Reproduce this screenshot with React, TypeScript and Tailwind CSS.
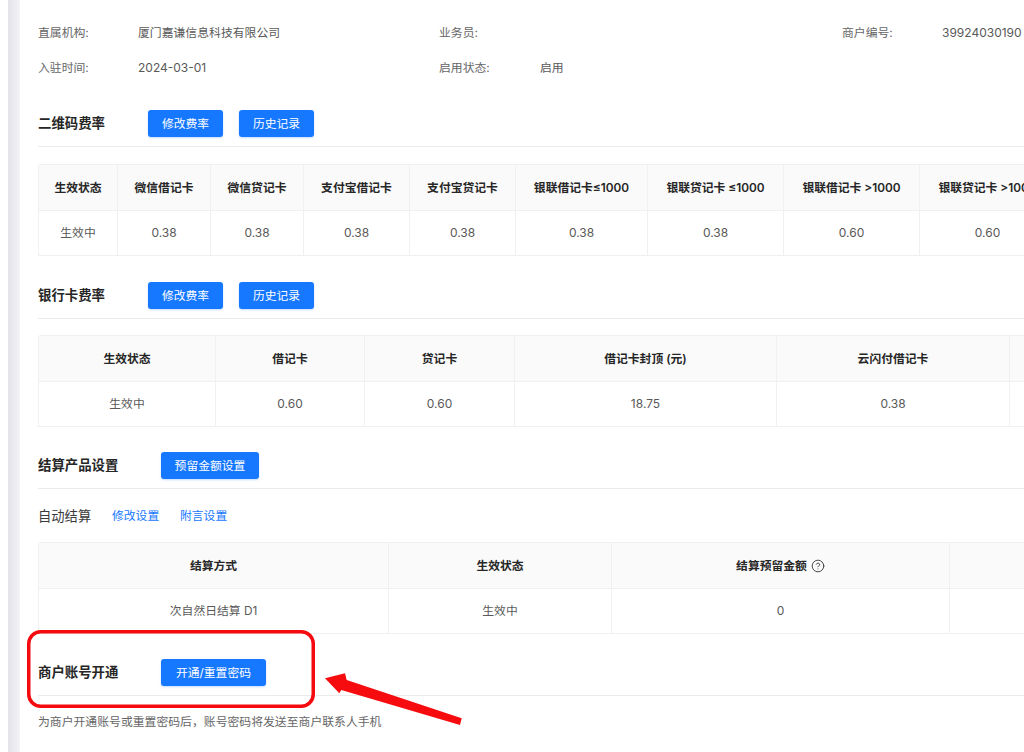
import React from "react";
import { CircleHelp } from "lucide-react";

type Col = { w: number; head: React.ReactNode; cell?: string };

function DataTable({ cols, className }: { cols: Col[]; className: string }) {
  return (
    <div className={`ml-[38px] flex w-max rounded-tl-[3px] border-t border-l border-[#f0f0f0] ${className}`}>
      {cols.map((c, i) => (
        <div key={i} className="flex shrink-0 flex-col border-r border-[#f0f0f0]" style={{ width: c.w }}>
          <div className="flex h-[46px] items-center justify-center whitespace-nowrap border-b border-[#f0f0f0] bg-[#fafafa] pt-[2px] text-[11.8px] font-semibold text-[#262626]">
            {c.head}
          </div>
          <div
            className={`flex h-[45px] items-center justify-center whitespace-nowrap border-b border-[#f0f0f0] text-[#595959] ${
              c.cell && /[\u4e00-\u9fff]/.test(c.cell) ? "pt-[2px] text-[11.8px]" : "text-xs"
            }`}
          >
            {c.cell}
          </div>
        </div>
      ))}
    </div>
  );
}

function Btn({ children, w, className = "" }: { children: React.ReactNode; w: string; className?: string }) {
  return (
    <button className={`flex h-[27px] items-center justify-center rounded-[3px] bg-[#1677ff] pt-[2px] text-[11.8px] text-white shadow-[0_1px_2px_rgba(22,119,255,0.25)] ${w} ${className}`}>
      {children}
    </button>
  );
}

function Section({ title, titleW, children, className }: { title: string; titleW: string; children: React.ReactNode; className: string }) {
  return (
    <div className={`ml-[38px] flex h-[37px] items-start border-b-[1.5px] border-[#ebebeb] ${className}`}>
      <div className={`flex h-[27px] shrink-0 items-center whitespace-nowrap text-[13.4px] font-semibold text-[#262626] ${titleW}`}>{title}</div>
      {children}
    </div>
  );
}

function Info({ label, value, w, labelW = "w-[100px]", valueCls = "pt-[2px] text-[11.85px]" }: { label: string; value?: string; w: string; labelW?: string; valueCls?: string }) {
  return (
    <div className={`flex shrink-0 items-center whitespace-nowrap ${w}`}>
      <span className={`shrink-0 pt-[2px] text-[11.85px] text-[#666666] ${labelW}`}>{label}</span>
      <span className={`text-[#595959] ${valueCls}`}>{value}</span>
    </div>
  );
}

export default function App() {
  return (
    <div className="relative flex h-[752px] w-[1024px] overflow-hidden bg-white font-['Inter','Noto_Sans_CJK_SC',sans-serif]">
      <div className="ml-[8px] h-full w-[12px] shrink-0 bg-gradient-to-r from-[#e3e3e9] to-[#f3f3f6]" />
      <main className="-ml-[20px] min-w-0 flex-1">
        <div className="mt-[15px] flex h-[35px] pl-[38px]">
          <Info label="直属机构:" value="厦门嘉谦信息科技有限公司" w="w-[401px]" />
          <Info label="业务员:" w="w-[403px]" />
          <Info label="商户编号:" value="39924030190" w="w-[200px]" valueCls="text-xs" />
        </div>
        <div className="flex h-[35px] pl-[38px]">
          <Info label="入驻时间:" value="2024-03-01" w="w-[401px]" valueCls="text-xs" />
          <Info label="启用状态:" value="启用" w="w-[403px]" labelW="w-[101px]" />
        </div>

        <Section title="二维码费率" titleW="w-[110px]" className="mt-[25px]">
          <Btn w="w-[75px]">修改费率</Btn>
          <Btn w="w-[75px]" className="ml-4">历史记录</Btn>
        </Section>
        <DataTable
          className="mt-[17px]"
          cols={[
            { w: 79, head: "生效状态", cell: "生效中" },
            { w: 93, head: "微信借记卡", cell: "0.38" },
            { w: 93, head: "微信贷记卡", cell: "0.38" },
            { w: 106, head: "支付宝借记卡", cell: "0.38" },
            { w: 106, head: "支付宝贷记卡", cell: "0.38" },
            { w: 132, head: "银联借记卡≤1000", cell: "0.38" },
            { w: 136, head: "银联贷记卡 ≤1000", cell: "0.38" },
            { w: 136, head: "银联借记卡 >1000", cell: "0.60" },
            { w: 136, head: "银联贷记卡 >1000", cell: "0.60" },
          ]}
        />

        <Section title="银行卡费率" titleW="w-[110px]" className="mt-[26px]">
          <Btn w="w-[75px]">修改费率</Btn>
          <Btn w="w-[75px]" className="ml-4">历史记录</Btn>
        </Section>
        <DataTable
          className="mt-[16px]"
          cols={[
            { w: 177, head: "生效状态", cell: "生效中" },
            { w: 149, head: "借记卡", cell: "0.60" },
            { w: 150, head: "贷记卡", cell: "0.60" },
            { w: 262, head: "借记卡封顶 (元)", cell: "18.75" },
            { w: 233, head: "云闪付借记卡", cell: "0.38" },
            { w: 100, head: "", cell: "" },
          ]}
        />

        <Section title="结算产品设置" titleW="w-[123px]" className="mt-[25px]">
          <Btn w="w-[98px]">预留金额设置</Btn>
        </Section>
        <div className="ml-[38px] mt-[17px] flex h-[20px] items-center whitespace-nowrap pt-[2px] text-[11.8px]">
          <span className="w-[74px] text-[13.3px] text-[#3a3a3a]">自动结算</span>
          <a className="w-[68px] text-[#1677ff]">修改设置</a>
          <a className="text-[#1677ff]">附言设置</a>
        </div>
        <DataTable
          className="mt-[16px]"
          cols={[
            { w: 350, head: "结算方式", cell: "次自然日结算 D1" },
            { w: 223, head: "生效状态", cell: "生效中" },
            {
              w: 338,
              head: (
                <span className="flex items-center gap-[4px]">
                  结算预留金额
                  <CircleHelp size={14} strokeWidth={1.5} className="-translate-y-px text-[#333333]" />
                </span>
              ),
              cell: "0",
            },
            { w: 100, head: "", cell: "" },
          ]}
        />

        <Section title="商户账号开通" titleW="w-[123px]" className="mt-[25px]">
          <Btn w="w-[105px]">开通/重置密码</Btn>
        </Section>
        <div className="ml-[38px] mt-[17px] whitespace-nowrap text-[11.85px] leading-[18px] text-[#666666]">
          为商户开通账号或重置密码后，账号密码将发送至商户联系人手机
        </div>
      </main>

      <svg className="absolute left-[27px] top-[630px]" width="288" height="78" viewBox="0 0 288 78">
        <rect x="1.750" y="1.750" width="284.500" height="74.500" rx="12" fill="none" stroke="#f40a0f" strokeWidth="3.500" />
      </svg>
      <svg className="absolute left-[320px] top-[670px]" width="150" height="62" viewBox="0 0 150 62">
        <path d="M5 8.300 L25 3.300 L26.700 10 L141.700 48.300 L140 55 L21.300 20 L19.300 23.300 Z" fill="#f60b0e" />
      </svg>
    </div>
  );
}
